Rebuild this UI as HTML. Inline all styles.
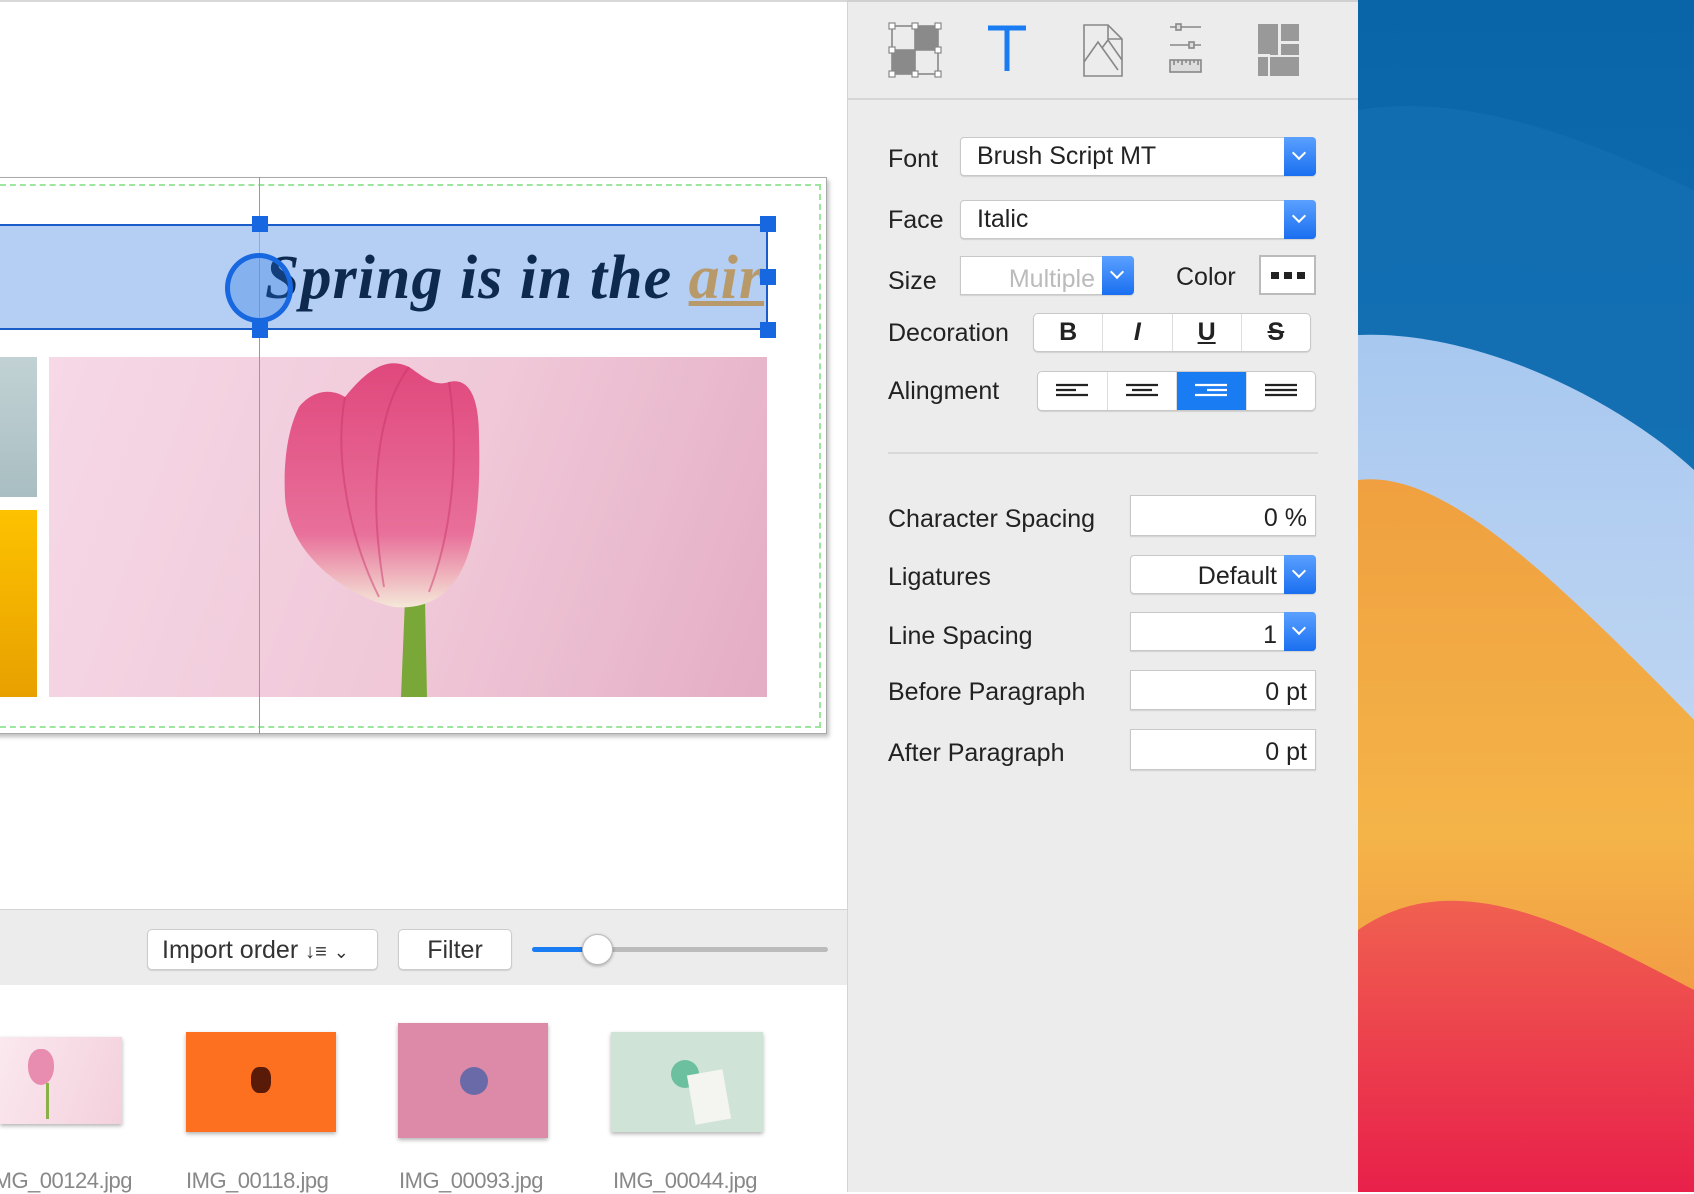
<!DOCTYPE html>
<html><head><meta charset="utf-8"><style>
*{margin:0;padding:0;box-sizing:border-box}
body{width:1694px;height:1192px;overflow:hidden;position:relative;background:#fff;font-family:"Liberation Sans",sans-serif;color:#222}
.a{position:absolute}
.lbl{position:absolute;font-size:25px;color:#222;line-height:30px}
.fld{position:absolute;background:#fff;border:1px solid #c8c8c8;border-radius:4px;box-shadow:0 1px 1px rgba(0,0,0,.12);font-size:25px;line-height:36px}
.dd{position:absolute;right:-1px;top:-1px;bottom:-1px;width:32px;background:linear-gradient(#5aa0ff,#1a6ff0);border-radius:0 4px 4px 0}
.dd:after{content:"";position:absolute;left:10px;top:11px;width:8px;height:8px;border-right:2.5px solid #fff;border-bottom:2.5px solid #fff;transform:rotate(45deg)}
.seg{position:absolute;background:#fff;border:1px solid #c8c8c8;border-radius:5px;box-shadow:0 1px 1px rgba(0,0,0,.12);display:flex;overflow:hidden}
.seg div{flex:1;border-right:1px solid #ddd;display:flex;align-items:center;justify-content:center;font-size:25px;font-weight:bold}
.seg div:last-child{border-right:none}
.h{position:absolute;width:16px;height:16px;background:#1667e0}
.cap{position:absolute;font-size:22px;color:#888;top:1168px;letter-spacing:-0.5px}
</style></head><body>
<svg class="a" style="left:1358px;top:0" width="336" height="1192" viewBox="0 0 336 1192">
<defs><linearGradient id="bl" x1="0" y1="0" x2="0" y2="1"><stop offset="0" stop-color="#0a64a8"/><stop offset="1" stop-color="#1c7ec0"/></linearGradient>
<linearGradient id="lb" x1="0" y1="0" x2="0" y2="1"><stop offset="0" stop-color="#a8c8f0"/><stop offset="1" stop-color="#d8e4f4"/></linearGradient>
<linearGradient id="or" x1="0" y1="0" x2="0" y2="1"><stop offset="0" stop-color="#f0a040"/><stop offset="0.5" stop-color="#f4b448"/><stop offset="1" stop-color="#f08040"/></linearGradient>
<linearGradient id="rd" x1="0" y1="0" x2="0" y2="1"><stop offset="0" stop-color="#f06050"/><stop offset="1" stop-color="#e8204a"/></linearGradient></defs>
<rect width="336" height="1192" fill="url(#bl)"/>
<path d="M0 110 C120 90 250 150 336 190 L336 1192 L0 1192Z" fill="#1672b4" opacity=".6"/>
<path d="M0 335 C120 330 260 400 336 470 L336 1192 L0 1192Z" fill="url(#lb)"/>
<path d="M0 480 C80 470 180 560 336 720 L336 1192 L0 1192Z" fill="url(#or)"/>
<path d="M0 930 C100 860 220 930 336 990 L336 1192 L0 1192Z" fill="url(#rd)"/>
</svg>
<div class="a" style="left:847px;top:0;width:511px;height:1192px;background:#ececec;border-left:1px solid #d4d4d4"></div>
<div class="a" style="left:847px;top:98px;width:511px;height:2px;background:#d6d6d6"></div>
<div class="a" style="left:847px;top:0;width:511px;height:2px;background:#d0d0d0"></div>
<svg class="a" style="left:888px;top:22px" width="440" height="56" viewBox="0 0 440 56">
<g fill="none" stroke="#888" stroke-width="1.6">
<rect x="4" y="4" width="46" height="48"/><line x1="4" y1="28" x2="50" y2="28"/><line x1="27" y1="4" x2="27" y2="52"/></g>
<rect x="27" y="4" width="23" height="24" fill="#8a8a8a"/><rect x="4" y="28" width="23" height="24" fill="#8a8a8a"/>
<g fill="#fff" stroke="#888" stroke-width="1.2"><rect x="1" y="1" width="6" height="6"/><rect x="24" y="1" width="6" height="6"/><rect x="47" y="1" width="6" height="6"/><rect x="1" y="25" width="6" height="6"/><rect x="47" y="25" width="6" height="6"/><rect x="1" y="49" width="6" height="6"/><rect x="24" y="49" width="6" height="6"/><rect x="47" y="49" width="6" height="6"/></g>
<path d="M100 6 H138 M119 6 V49" stroke="#1a7cf2" stroke-width="5"/>
<path d="M196 3 H220 L234 17 V54 H196Z M220 3 V17 H234 M196 40 L210 20 L230 48 M214 26 L220 18 L234 38" fill="none" stroke="#888" stroke-width="1.6"/>
<g stroke="#888" stroke-width="1.6" fill="#ddd"><line x1="282" y1="5" x2="313" y2="5"/><rect x="288" y="2" width="5" height="6"/><line x1="282" y1="23" x2="313" y2="23"/><rect x="301" y="20" width="5" height="6"/><rect x="282" y="38" width="31" height="12"/><path d="M286 38v5M290 38v3M294 38v5M298 38v3M302 38v5M306 38v3M310 38v5" fill="none"/></g>
<g fill="#999"><rect x="370" y="2" width="20" height="30"/><rect x="393" y="2" width="18" height="17"/><rect x="382" y="22" width="8" height="11"/><rect x="393" y="22" width="18" height="11"/><rect x="370" y="35" width="10" height="19"/><rect x="382" y="35" width="29" height="19"/></g>
</svg>
<div class="lbl" style="left:888px;top:144px">Font</div>
<div class="fld" style="left:960px;top:137px;width:356px;height:39px;padding-left:16px">Brush Script MT<div class="dd"></div></div>
<div class="lbl" style="left:888px;top:205px">Face</div>
<div class="fld" style="left:960px;top:200px;width:356px;height:39px;padding-left:16px">Italic<div class="dd"></div></div>
<div class="lbl" style="left:888px;top:266px">Size</div>
<div class="fld" style="left:960px;top:256px;width:174px;height:39px;border-radius:0 4px 4px 0;color:#bbb;text-align:right;padding-right:38px;line-height:44px">Multiple<div class="dd"></div></div>
<div class="lbl" style="left:1176px;top:262px">Color</div>
<div class="a" style="left:1259px;top:255px;width:57px;height:40px;border:2px solid #bbb;background:#fff"><div class="a" style="left:10px;top:15px;width:8px;height:7px;background:#222;box-shadow:13px 0 #222,26px 0 #222"></div></div>
<div class="lbl" style="left:888px;top:318px">Decoration</div>
<div class="seg" style="left:1033px;top:313px;width:278px;height:39px"><div>B</div><div style="font-style:italic">I</div><div style="text-decoration:underline">U</div><div style="text-decoration:line-through">S</div></div>
<div class="lbl" style="left:888px;top:376px">Alingment</div>
<div class="seg" style="left:1037px;top:371px;width:279px;height:40px">
<div><svg width="32" height="16"><path d="M0 2H32M0 7H20M0 12H32" stroke="#222" stroke-width="2.2"/></svg></div>
<div><svg width="32" height="16"><path d="M0 2H32M6 7H26M0 12H32" stroke="#222" stroke-width="2.2"/></svg></div>
<div style="background:#1a7cf2"><svg width="32" height="16"><path d="M0 2H32M12 7H32M0 12H32" stroke="#fff" stroke-width="2.2"/></svg></div>
<div><svg width="32" height="16"><path d="M0 2H32M0 7H32M0 12H32" stroke="#222" stroke-width="2.2"/></svg></div></div>
<div class="a" style="left:888px;top:452px;width:430px;height:2px;background:#d8d8d8"></div>
<div class="lbl" style="left:888px;top:504px">Character Spacing</div>
<div class="fld" style="left:1130px;top:495px;width:186px;height:41px;text-align:right;padding-right:8px;border-radius:0;line-height:44px">0 %</div>
<div class="lbl" style="left:888px;top:562px">Ligatures</div>
<div class="fld" style="left:1130px;top:555px;width:186px;height:39px;text-align:right;padding-right:38px;line-height:40px">Default<div class="dd"></div></div>
<div class="lbl" style="left:888px;top:621px">Line Spacing</div>
<div class="fld" style="left:1130px;top:612px;width:186px;height:39px;text-align:right;padding-right:38px;line-height:44px;border-radius:0 4px 4px 0">1<div class="dd"></div></div>
<div class="lbl" style="left:888px;top:677px">Before Paragraph</div>
<div class="fld" style="left:1130px;top:670px;width:186px;height:40px;text-align:right;padding-right:8px;border-radius:0;line-height:42px">0 pt</div>
<div class="lbl" style="left:888px;top:738px">After Paragraph</div>
<div class="fld" style="left:1130px;top:729px;width:186px;height:41px;text-align:right;padding-right:8px;border-radius:0;line-height:44px">0 pt</div>
<div class="a" style="left:0;top:0;width:847px;height:2px;background:#d8d8d8"></div>
<div class="a" style="left:-10px;top:177px;width:837px;height:557px;background:#fff;border:1px solid #aaa;box-shadow:2px 3px 4px rgba(0,0,0,.25)"></div>
<div class="a" style="left:-10px;top:184px;width:831px;height:544px;border:2px dashed #9ee59e"></div>
<div class="a" style="left:0;top:357px;width:37px;height:140px;background:linear-gradient(#c2d2d4,#a9bec2)"></div>
<div class="a" style="left:0;top:510px;width:37px;height:187px;background:linear-gradient(#fdc200,#e8a000)"></div>
<div class="a" style="left:49px;top:357px;width:718px;height:340px;background:linear-gradient(110deg,#f6d8e6,#f0c8d8 55%,#e4adc4)"></div>
<svg class="a" style="left:49px;top:357px" width="718" height="340" viewBox="0 0 718 340">
<defs><linearGradient id="tp" x1="0" y1="0" x2="0" y2="1"><stop offset="0" stop-color="#e0487c"/><stop offset=".7" stop-color="#e8709a"/><stop offset="1" stop-color="#f4e8d8"/></linearGradient></defs>
<path d="M352 340 L356 242 L376 242 L378 340Z" fill="#7aa838"/>
<path d="M345 250 C300 240 240 200 236 140 C234 100 240 70 250 50 C262 35 280 30 296 40 C320 10 340 0 360 10 C375 20 385 30 400 25 C420 20 430 40 430 80 C432 150 425 200 405 225 C390 245 370 252 345 250Z" fill="url(#tp)"/>
<path d="M360 10 C330 50 318 130 335 230 M296 40 C285 100 300 180 330 240 M400 25 C410 90 405 170 380 235" stroke="#c83068" stroke-width="2" fill="none" opacity=".45"/>
</svg>
<div class="a" style="left:259px;top:177px;width:1px;height:557px;background:#999"></div>
<div class="a" style="left:0;top:224px;width:768px;height:106px;background:rgba(140,180,238,.65);border:2px solid #1a5cc8;border-left:none"></div>
<div class="a" style="right:930px;top:228px;font-family:'Liberation Serif',serif;font-style:italic;font-weight:bold;font-size:62px;line-height:100px;color:#0d2a4e;letter-spacing:1px;white-space:nowrap">Spring is in the <span style="color:#b89a6a;text-decoration:underline;text-decoration-thickness:5px">air</span></div>
<div class="a" style="left:225px;top:253px;width:68px;height:70px;border:5px solid #1667e0;border-radius:50%;background:rgba(30,110,230,.3)"></div>
<div class="h" style="left:252px;top:216px"></div><div class="h" style="left:252px;top:322px"></div>
<div class="h" style="left:760px;top:216px"></div><div class="h" style="left:760px;top:269px"></div><div class="h" style="left:760px;top:322px"></div>
<div class="a" style="left:0;top:909px;width:847px;height:76px;background:#ececec;border-top:1px solid #d4d4d4"></div>
<div class="a" style="left:147px;top:929px;width:231px;height:41px;background:#fff;border:1px solid #ccc;border-radius:5px;box-shadow:0 1px 1px rgba(0,0,0,.12);font-size:25px;line-height:40px;padding-left:14px;color:#333">Import order <span style="font-size:20px">↓≡</span> <span style="font-size:18px">⌄</span></div>
<div class="a" style="left:398px;top:929px;width:114px;height:41px;background:#fff;border:1px solid #ccc;border-radius:5px;box-shadow:0 1px 1px rgba(0,0,0,.12);font-size:25px;line-height:40px;text-align:center;color:#333">Filter</div>
<div class="a" style="left:532px;top:947px;width:296px;height:5px;border-radius:3px;background:#bbb"></div>
<div class="a" style="left:532px;top:947px;width:65px;height:5px;border-radius:3px;background:#1a7cf2"></div>
<div class="a" style="left:582px;top:934px;width:31px;height:31px;border-radius:50%;background:#fff;border:1px solid #bbb;box-shadow:0 1px 3px rgba(0,0,0,.3)"></div>
<div class="a" style="left:0;top:1037px;width:122px;height:87px;background:linear-gradient(110deg,#fbe8ef,#f3d0dc);box-shadow:0 2px 4px rgba(0,0,0,.3)"><div class="a" style="left:28px;top:12px;width:26px;height:36px;border-radius:45% 45% 50% 50%;background:#e88cb0"></div><div class="a" style="left:46px;top:46px;width:3px;height:36px;background:#8ab048"></div></div>
<div class="a" style="left:186px;top:1032px;width:150px;height:100px;background:#fd7020;box-shadow:0 2px 4px rgba(0,0,0,.3)"><div class="a" style="left:65px;top:35px;width:20px;height:26px;border-radius:40%;background:#5a1a08"></div></div>
<div class="a" style="left:398px;top:1023px;width:150px;height:115px;background:#dc8aa8;box-shadow:0 2px 4px rgba(0,0,0,.3)"><div class="a" style="left:62px;top:44px;width:28px;height:28px;border-radius:50%;background:#6a6aa8"></div></div>
<div class="a" style="left:611px;top:1032px;width:152px;height:100px;background:#cfe4d6;box-shadow:0 2px 4px rgba(0,0,0,.3)"><div class="a" style="left:60px;top:28px;width:28px;height:28px;border-radius:50%;background:#6cc0a0"></div><div class="a" style="left:80px;top:40px;width:36px;height:50px;background:#f4f4f0;transform:rotate(-10deg)"></div></div>
<div class="cap" style="left:-12px">IMG_00124.jpg</div>
<div class="cap" style="left:186px">IMG_00118.jpg</div>
<div class="cap" style="left:399px">IMG_00093.jpg</div>
<div class="cap" style="left:613px">IMG_00044.jpg</div>
</body></html>
